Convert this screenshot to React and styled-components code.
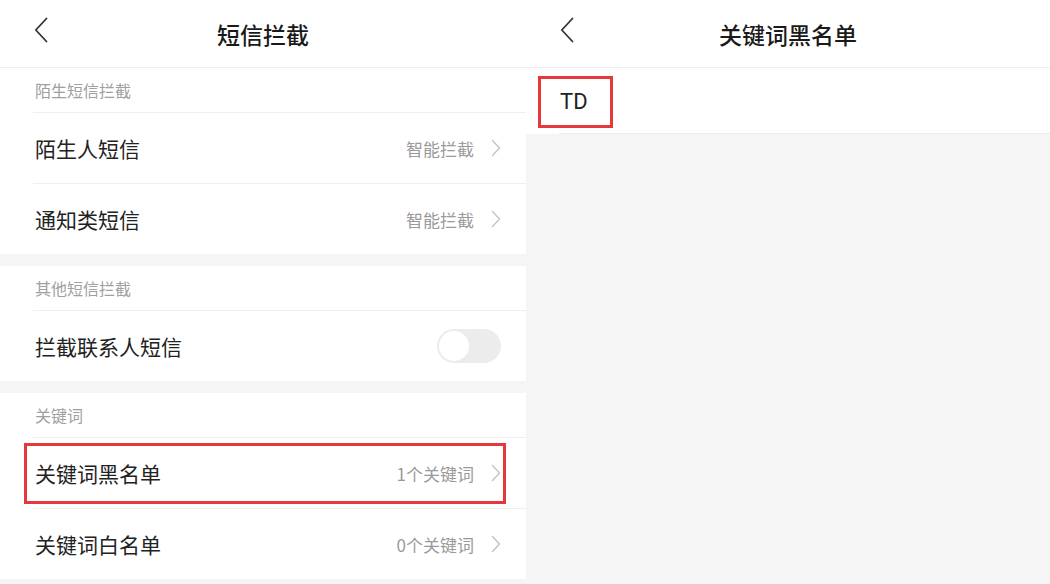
import React from 'react'
import styled, { createGlobalStyle } from 'styled-components'

const GlobalStyle = createGlobalStyle`
  html, body {
    margin: 0;
    padding: 0;
    background: #f5f5f5;
  }
  body {
    font-family: "Noto Sans CJK SC", "Noto Sans", sans-serif;
  }
`

const Screen = styled.div`
  display: grid;
  grid-template-columns: 526px 1fr;
  width: 1050px;
  height: 584px;
  overflow: hidden;
  background: #f5f5f5;
`

const Pane = styled.div`
  display: flex;
  flex-direction: column;
  background: #f5f5f5;
  min-width: 0;
`

const NavBar = styled.div`
  position: relative;
  height: 67px;
  display: flex;
  align-items: center;
  justify-content: center;
  background: #fff;
  border-bottom: 1px solid #efefef;
  flex-shrink: 0;
`

const BackButton = styled.div`
  position: absolute;
  left: 34px;
  top: 17px;
  width: 14px;
  height: 26px;
  display: flex;
`

const Title = styled.div`
  font-size: 23px;
  font-weight: 500;
  color: #1a1a1a;
`

const Group = styled.div`
  background: #fff;
  margin-bottom: 12px;
`

const GroupLabel = styled.div`
  height: 44px;
  display: flex;
  align-items: center;
  margin-left: 33px;
  padding-left: 2px;
  font-size: 16px;
  color: #a0a0a0;
  border-bottom: 1px solid #efefef;
`

const Row = styled.div`
  position: relative;
  height: 70px;
  display: flex;
  align-items: center;
  padding: 0 25px 0 35px;
  &::after {
    content: '';
    display: ${(p) => (p.last ? 'none' : 'block')};
    position: absolute;
    left: 33px;
    right: 0;
    bottom: -1px;
    height: 1px;
    background: #efefef;
  }
  & + & {
    margin-top: 1px;
  }
`

const RowTitle = styled.div`
  flex: 1;
  font-size: 21px;
  color: #222;
`

const RowValue = styled.div`
  font-size: 17px;
  color: #9a9a9a;
  margin-right: 17px;
`

const Toggle = styled.div`
  width: 64px;
  height: 34px;
  border-radius: 17px;
  background: #ececec;
  display: flex;
  align-items: center;
  padding: 2px;
  box-sizing: border-box;
`

const Knob = styled.div`
  width: 30px;
  height: 30px;
  border-radius: 50%;
  background: #fff;
`

const Highlight = styled.div`
  position: absolute;
  border: 3px solid #e5383b;
  box-sizing: border-box;
  pointer-events: none;
  top: ${(p) => p.top}px;
  bottom: ${(p) => p.bottom}px;
  left: ${(p) => p.left}px;
  ${(p) => (p.width ? `width: ${p.width}px;` : `right: ${p.right}px;`)}
`

const KeywordRow = styled.div`
  position: relative;
  height: 66px;
  display: flex;
  align-items: center;
  padding-left: 34px;
  background: #fff;
  font-size: 22px;
  color: #222;
  font-family: Roboto, "Noto Sans CJK SC", sans-serif;
  &::after {
    content: '';
    position: absolute;
    left: 33px;
    right: 0;
    bottom: 0;
    height: 1px;
    background: #ececec;
  }
`

const BackIcon = () => (
  <svg width="14" height="26" viewBox="0 0 14 26">
    <path d="M12.5 1.5 L1.8 13 L12.5 24.5" fill="none" stroke="#333" strokeWidth="1.8" strokeLinecap="round" strokeLinejoin="round" />
  </svg>
)

const Chevron = () => (
  <svg width="10" height="18" viewBox="0 0 10 18">
    <path d="M1.5 1.5 L8.5 9 L1.5 16.5" fill="none" stroke="#c6c6c6" strokeWidth="1.5" strokeLinecap="round" strokeLinejoin="round" />
  </svg>
)

function NavRow({ title, value, last, highlight }) {
  return (
    <Row last={last}>
      <RowTitle>{title}</RowTitle>
      <RowValue>{value}</RowValue>
      <Chevron />
      {highlight && <Highlight top={5} bottom={4} left={24} right={20} />}
    </Row>
  )
}

export default function App() {
  return (
    <>
      <GlobalStyle />
      <Screen>
        <Pane>
          <NavBar>
            <BackButton><BackIcon /></BackButton>
            <Title>短信拦截</Title>
          </NavBar>
          <Group>
            <GroupLabel>陌生短信拦截</GroupLabel>
            <NavRow title="陌生人短信" value="智能拦截" />
            <NavRow title="通知类短信" value="智能拦截" last />
          </Group>
          <Group>
            <GroupLabel>其他短信拦截</GroupLabel>
            <Row last>
              <RowTitle>拦截联系人短信</RowTitle>
              <Toggle><Knob /></Toggle>
            </Row>
          </Group>
          <Group>
            <GroupLabel>关键词</GroupLabel>
            <NavRow title="关键词黑名单" value="1个关键词" highlight />
            <NavRow title="关键词白名单" value="0个关键词" last />
          </Group>
        </Pane>
        <Pane>
          <NavBar>
            <BackButton><BackIcon /></BackButton>
            <Title>关键词黑名单</Title>
          </NavBar>
          <KeywordRow>
            TD
            <Highlight top={8} bottom={6} left={12} width={75} />
          </KeywordRow>
        </Pane>
      </Screen>
    </>
  )
}
